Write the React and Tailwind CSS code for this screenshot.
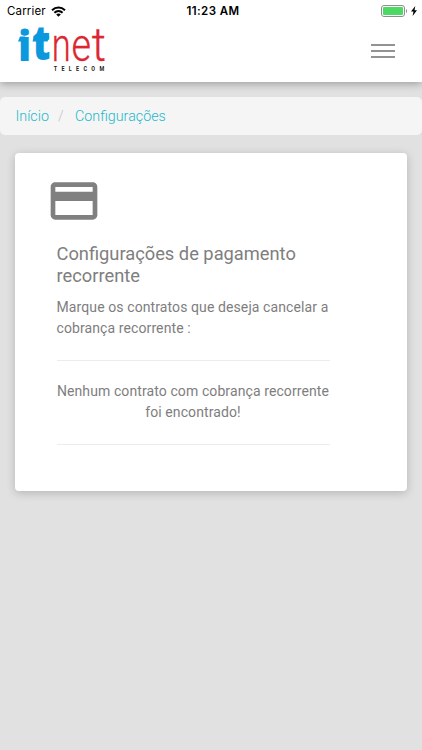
function StatusBar() {
  return (
    <div className="grid h-[22px] grid-cols-3 items-center px-[7px] font-['Inter',sans-serif] text-[11.5px] leading-[14px] text-black">
      <div className="flex items-center gap-[5px]">
        <span className="tracking-[0.15px]">Carrier</span>
        <svg width="15" height="11" viewBox="0 0 15 11" fill="none" stroke="#000" strokeWidth="2">
          <path d="M1 4.2C4.8.5 10.2.5 14 4.2" />
          <path d="M3.4 6.8c2.4-2.3 5.8-2.3 8.2 0" />
          <path d="M5.2 8.5c1.3-1.2 3.3-1.2 4.6 0L7.5 10.8z" fill="#000" stroke="none" />
        </svg>
      </div>
      <div className="pl-[4px] text-center font-semibold tracking-[0.4px] whitespace-nowrap">11:23 AM</div>
      <div className="-mr-[2px] flex items-center justify-end gap-[3px]">
        <svg width="27" height="12" viewBox="0 0 27 12">
          <rect x=".5" y=".5" width="23" height="11" rx="2.5" fill="#fff" stroke="#8e8e8e" />
          <rect x="2" y="2" width="20" height="8" rx="1" fill="#4cd964" />
          <path d="M25 4v4c1.500-.7 1.500-3.300 0-4z" fill="#8e8e8e" />
        </svg>
        <svg width="6" height="10" viewBox="0 0 6 10">
          <path d="M4.300 0 0 5.500h2.500L1.600 10 6 4.200H3.500z" fill="#000" />
        </svg>
      </div>
    </div>
  );
}

function Logo() {
  return (
    <svg className="overflow-visible" width="92" height="50" viewBox="16 24 92 50" role="img" aria-label="itnet telecom">
      <g fontFamily="Open Sans, sans-serif" fontWeight="800" fontSize="43" fill="#0b98dc">
        <text transform="translate(18 60.500) scale(.95 1)">i</text>
        <text transform="translate(32.300 60) scale(.92 1.120)">t</text>
      </g>
      <path d="M18 41.500 20 36.500h5v5zM32.500 41.500l1.500-5h15.500l-2 5z" fill="#0b98dc" />
      <g fontFamily="Roboto, sans-serif" fontWeight="300" fontSize="46" fill="#dc2733" stroke="#dc2733" strokeWidth=".3">
        <text transform="translate(51.700 60.500) scale(.75 1)">n</text>
        <text transform="translate(71.500 60.500) scale(.82 1)">e</text>
        <text transform="translate(91.800 60.500) scale(.96 1)">t</text>
      </g>
      <text transform="translate(53.700 70.800) scale(.72 1)" fontFamily="Roboto, sans-serif" fontWeight="700" fontSize="7.500" letterSpacing="6.050" fill="#222">TELECOM</text>
    </svg>
  );
}

export default function App() {
  return (
    <div className="flex h-[750px] w-[422px] flex-col overflow-hidden bg-[#e1e1e1] font-['Roboto',sans-serif] text-[#7e7e7e]">
      <header className="h-[82px] shrink-0 bg-white shadow-[0_2px_8px_rgba(0,0,0,0.3)]">
        <StatusBar />
        <div className="flex items-start justify-between pt-[2px] pr-[27px] pl-[16px]">
          <Logo />
          <button aria-label="Menu" className="mt-[20px] flex w-[24px] flex-col gap-[4px]">
            <span className="h-[2px] bg-[#929292]" />
            <span className="h-[2px] bg-[#929292]" />
            <span className="h-[2px] bg-[#929292]" />
          </button>
        </div>
      </header>
      <nav className="mt-[15px] flex h-[38px] shrink-0 items-center rounded-[5px] bg-[#f5f5f5] pt-[1px] pl-[15.5px] text-[14.3px] font-light text-[#26b8c9]">
        <a>Início</a>
        <span className="w-[26px] pl-[9px] text-[#c4c4c4]">/</span>
        <a>Configurações</a>
      </nav>
      <main className="mx-[15px] mt-[18px] h-[338px] w-[392px] shrink-0 rounded-[4px] bg-white pt-[20px] pl-[41.5px] shadow-[0_2px_10px_rgba(0,0,0,0.2)]">
        <svg className="-ml-[11px]" width="56" height="56" viewBox="0 0 24 24" fill="#808080">
          <path d="M20 4H4c-1.110 0-1.990.89-1.990 2L2 18c0 1.110.89 2 2 2h16c1.110 0 2-.89 2-2V6c0-1.110-.89-2-2-2zm0 14H4v-6h16v6zm0-10H4V6h16v2z" />
        </svg>
        <h1 className="mt-[14px] text-[18.3px] leading-[21.5px]">Configurações de pagamento<br />recorrente</h1>
        <p className="mt-[11px] text-[14px] leading-[21px] tracking-[0.1px] whitespace-nowrap">Marque os contratos que deseja cancelar a<br />cobrança recorrente :</p>
        <hr className="mt-[21px] w-[273px] border-[#ececec]" />
        <p className="mt-[20px] w-[273px] text-center text-[14px] leading-[21px] tracking-[0.1px] whitespace-nowrap">Nenhum contrato com cobrança recorrente<br />foi encontrado!</p>
        <hr className="mt-[21px] w-[273px] border-[#ececec]" />
      </main>
    </div>
  );
}
